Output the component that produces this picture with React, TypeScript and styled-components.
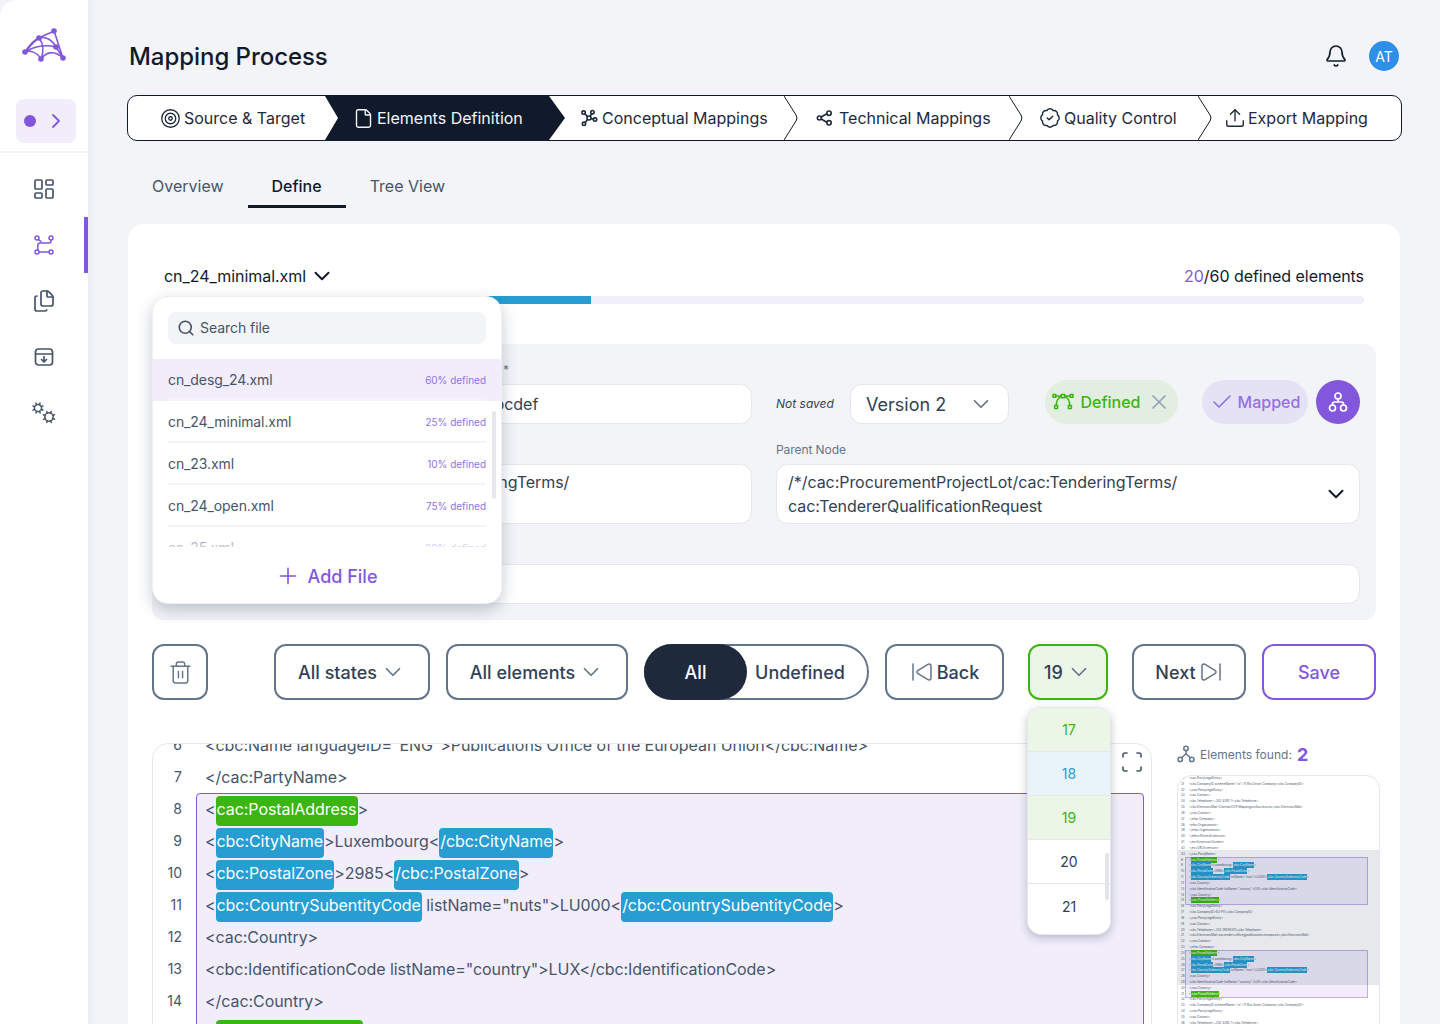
import React from "react";
import styled, { createGlobalStyle } from "styled-components";
import {
  Bell, Check, ChevronDown, ChevronRight, Files, LayoutDashboard, Plus, Scan, Search,
  SkipBack, SkipForward, Target, File as FileIcon, BadgeCheck, Upload, Trash2, X,
} from "lucide-react";

const PURPLE = "#8257dc";
const GREEN = "#3cb412";
const BLUE = "#279dd1";
const INK = "#111a2b";
const SLATE = "#334155";
const BORDER = "#64748b";
const PAGE = "#f3f4f8";

const Global = createGlobalStyle`
  * { box-sizing: border-box; }
  html, body { margin: 0; padding: 0; background: ${PAGE}; }
  body { font-family: Inter, "Liberation Sans", sans-serif; color: ${INK}; }
`;

const Page = styled.div`
  display: flex;
  width: 1440px;
  height: 1024px;
  overflow: hidden;
  background: ${PAGE};
`;

const Sidebar = styled.aside`
  flex: none;
  width: 88px;
  background: #fff;
  border-top-left-radius: 16px;
  box-shadow: 2px 0 6px rgba(100, 116, 139, 0.07);
  padding-top: 24px;
  display: flex;
  flex-direction: column;
`;

const Logo = styled.svg`
  width: 48px;
  height: 40px;
  margin: 0 0 35px 20px;
  display: block;
`;

const Expander = styled.div`
  width: 60px;
  height: 44px;
  margin-left: 16px;
  border-radius: 8px;
  background: #f1edfb;
  display: flex;
  align-items: center;
  padding-left: 8px;
  gap: 8px;
  color: ${PURPLE};
`;

const Dot = styled.span`
  width: 12px;
  height: 12px;
  border-radius: 50%;
  background: ${PURPLE};
`;

const SideRule = styled.div`
  height: 2px;
  margin: 8px 0;
  background: ${PAGE};
`;

const NavItem = styled.div<{ $active?: boolean }>`
  position: relative;
  height: 56px;
  display: flex;
  align-items: center;
  justify-content: center;
  color: ${(p) => (p.$active ? PURPLE : "#475569")};
  ${(p) =>
    p.$active
      ? `&::after { content: ""; position: absolute; right: 0; top: 0; bottom: 0; width: 4px; background: ${PURPLE}; }`
      : ""}
`;

const Main = styled.main`
  flex: 1;
  min-width: 0;
  padding: 0 40px;
`;

const Header = styled.header`
  height: 95px;
  padding-top: 18px;
  display: flex;
  align-items: center;
  justify-content: space-between;
  margin-right: 1px;
`;

const Title = styled.h1`
  margin: 0 0 0 1px;
  font-size: 24px;
  font-weight: 500;
  letter-spacing: -0.05px;
  color: ${INK};
`;

const HeaderTools = styled.div`
  display: flex;
  align-items: center;
  gap: 21px;
  margin-top: -1px;
  color: ${INK};
`;

const Avatar = styled.div`
  width: 30px;
  height: 30px;
  border-radius: 50%;
  background: #2f8fe6;
  color: #fff;
  font-size: 14px;
  display: flex;
  align-items: center;
  justify-content: center;
`;

const Stepper = styled.div`
  height: 46px;
  margin: 0 -2px 0 -1px;
  border: 1px solid ${INK};
  border-radius: 10px;
  background: #fff;
  display: flex;
  overflow: hidden;
`;

const Step = styled.div<{ $w: number; $pad: number; $gap: number; $active?: boolean }>`
  position: relative;
  flex: none;
  width: ${(p) => p.$w}px;
  padding-left: ${(p) => p.$pad}px;
  display: flex;
  align-items: center;
  gap: ${(p) => p.$gap}px;
  font-size: 16px;
  color: ${(p) => (p.$active ? "#f1f5f9" : "#1e293b")};
  z-index: ${(p) => (p.$active ? 1 : 0)};
  & > span, & > svg:not(.chev) { position: relative; flex: none; }
  ${(p) =>
    p.$active
      ? `&::before { content: ""; position: absolute; left: 0; top: 0; bottom: 0; width: 240px; background: ${INK};
         clip-path: polygon(0 0, 224px 0, 240px 50%, 224px 100%, 0 100%, 13px 50%); }`
      : ""}
`;

const Chevron = styled.svg`
  position: absolute;
  left: 100%;
  top: 0;
  width: 17px;
  height: 44px;
  fill: none;
  stroke: ${INK};
  stroke-width: 1;
`;

const Tabs = styled.nav`
  display: flex;
  margin-top: 24px;
`;

const Tab = styled.div<{ $active?: boolean }>`
  padding: 9px 24px 7px;
  line-height: 24px;
  font-size: 16px;
  font-weight: ${(p) => (p.$active ? 500 : 400)};
  color: ${(p) => (p.$active ? INK : "#475569")};
  border-bottom: 3px solid ${(p) => (p.$active ? INK : "transparent")};
`;

const Card = styled.section`
  position: relative;
  margin-top: 16px;
  height: 900px;
  padding: 40px 24px 0;
  background: #fff;
  border-radius: 16px;
`;

const FileRow = styled.div`
  display: flex;
  align-items: center;
  justify-content: space-between;
  height: 24px;
  padding: 0 12px;
  font-size: 16px;
  letter-spacing: -0.05px;
  color: ${INK};
`;

const FileName = styled.div`
  display: flex;
  align-items: center;
  gap: 3px;
`;

const Accent = styled.span`
  color: ${PURPLE};
`;

const Progress = styled.div`
  height: 8px;
  margin: 8px 12px 0;
  border-radius: 4px;
  background: #f1f0fa;
  overflow: hidden;
`;

const ProgressFill = styled.div`
  width: 427px;
  height: 100%;
  background: ${BLUE};
`;

const Panel = styled.div`
  margin-top: 40px;
  padding: 18px 16px 16px;
  background: ${PAGE};
  border-radius: 12px;
  display: grid;
  grid-template-columns: 584px 584px;
  column-gap: 24px;
  row-gap: 18px;
`;

const Field = styled.div<{ $span?: boolean }>`
  min-width: 0;
  ${(p) => (p.$span ? "grid-column: 1 / span 2;" : "")}
`;

const Label = styled.div`
  height: 16px;
  line-height: 16px;
  margin-bottom: 6px;
  font-size: 12px;
  letter-spacing: -0.07px;
  color: #64748b;
  white-space: nowrap;
`;

const Input = styled.div<{ $h: number }>`
  height: ${(p) => p.$h}px;
  padding: 5px 12px 5px 11px;
  background: #fff;
  border: 1px solid #e5e7eb;
  border-radius: 12px;
  font-size: 16px;
  line-height: 24px;
  letter-spacing: -0.05px;
  color: ${SLATE};
  display: flex;
  align-items: center;
  justify-content: space-between;
  white-space: nowrap;
  overflow: hidden;
  & > svg { margin-right: -2px; }
`;

const InputText = styled.div`
  color: ${SLATE};
`;

const StatusRow = styled.div`
  display: flex;
  align-items: flex-end;
  height: 62px;
`;

const NotSaved = styled.span`
  font-size: 12px;
  font-style: italic;
  color: ${SLATE};
  width: 74px;
  height: 40px;
  line-height: 40px;
`;

const VersionSelect = styled.div`
  width: 159px;
  height: 40px;
  padding: 0 14px 0 15px;
  background: #fff;
  border: 1px solid #e5e7eb;
  border-radius: 12px;
  font-size: 18px;
  color: ${SLATE};
  display: flex;
  align-items: center;
  justify-content: space-between;
  margin-right: 36px;
`;

const Pill = styled.div<{ $w: number; $bg: string; $fg: string; $mr: number; $gap: number }>`
  width: ${(p) => p.$w}px;
  height: 44px;
  margin-right: ${(p) => p.$mr}px;
  border-radius: 22px;
  background: ${(p) => p.$bg};
  color: ${(p) => p.$fg};
  font-size: 16px;
  font-weight: 500;
  display: flex;
  align-items: center;
  justify-content: center;
  gap: ${(p) => p.$gap}px;
`;

const RoundButton = styled.div`
  width: 44px;
  height: 44px;
  border-radius: 50%;
  background: ${PURPLE};
  color: #fff;
  display: flex;
  align-items: center;
  justify-content: center;
`;

const Popover = styled.div`
  position: absolute;
  left: 24px;
  top: 72px;
  width: 350px;
  height: 308px;
  background: #fff;
  border-radius: 16px;
  border: 1px solid #eef0f4;
  box-shadow: 0 6px 16px rgba(51, 65, 85, 0.28);
  display: flex;
  flex-direction: column;
  overflow: hidden;
  z-index: 5;
`;

const SearchBox = styled.div`
  flex: none;
  margin: 15px 15px 15px;
  height: 32px;
  padding-left: 9px;
  padding-bottom: 1px;
  border-radius: 8px;
  background: ${PAGE};
  display: flex;
  align-items: center;
  gap: 5px;
  font-size: 14px;
  letter-spacing: -0.05px;
  color: #475569;
`;

const FileList = styled.div`
  position: relative;
  flex: 1;
  min-height: 0;
  overflow: hidden;
  &::after {
    content: "";
    position: absolute;
    left: 0;
    right: 0;
    bottom: 0;
    height: 22px;
    background: linear-gradient(rgba(255, 255, 255, 0), rgba(255, 255, 255, 0.7));
  }
`;

const FileItem = styled.div<{ $active?: boolean }>`
  height: 42px;
  padding: 0 15px;
  background: ${(p) => (p.$active ? "#f1edfb" : "transparent")};
`;

const FileItemInner = styled.div`
  height: 42px;
  display: flex;
  align-items: center;
  justify-content: space-between;
  font-size: 14px;
  letter-spacing: -0.1px;
  color: #475569;
  border-bottom: 2px solid ${PAGE};
`;

const Percent = styled.span`
  font-size: 10px;
  padding-top: 2px;
  letter-spacing: -0.02px;
  color: #9272e3;
`;

const ListScroll = styled.div`
  position: absolute;
  right: 5px;
  top: 52px;
  width: 4px;
  height: 88px;
  border-radius: 2px;
  background: #e5e7eb;
`;

const AddFile = styled.div`
  flex: none;
  height: 56px;
  padding-top: 2px;
  padding-right: 2px;
  display: flex;
  align-items: center;
  justify-content: center;
  gap: 7px;
  font-size: 18px;
  font-weight: 500;
  color: ${PURPLE};
  background: #fff;
`;

const Toolbar = styled.div`
  display: flex;
  margin-top: 24px;
  height: 56px;
`;

const ToolButton = styled.div<{ $w: number; $mr: number; $tone?: "purple" | "green" }>`
  position: relative;
  flex: none;
  width: ${(p) => p.$w}px;
  margin-right: ${(p) => p.$mr}px;
  height: 56px;
  border: 2px solid ${(p) => (p.$tone === "purple" ? PURPLE : p.$tone === "green" ? GREEN : BORDER)};
  border-radius: 12px;
  background: ${(p) => (p.$tone === "green" ? "#ecf6e7" : "#fff")};
  color: ${(p) => (p.$tone === "purple" ? PURPLE : SLATE)};
  font-size: 18px;
  font-weight: 500;
  display: flex;
  align-items: center;
  justify-content: center;
  gap: 3px;
`;

const Toggle = styled.div`
  flex: none;
  width: 225px;
  height: 56px;
  margin-right: 16px;
  border: 2px solid ${BORDER};
  border-radius: 28px;
  display: flex;
  align-items: center;
  font-size: 18px;
  font-weight: 500;
  color: ${SLATE};
`;

const ToggleOn = styled.div`
  width: 103px;
  height: 56px;
  margin-left: -2px;
  border-radius: 28px;
  background: #1e293b;
  color: #fff;
  display: flex;
  align-items: center;
  justify-content: center;
`;

const ToggleOff = styled.div`
  flex: 1;
  text-align: center;
  padding-right: 14px;
`;

const NumberMenu = styled.div`
  position: absolute;
  left: -3px;
  top: 61px;
  width: 84px;
  height: 228px;
  background: #fff;
  border: 1px solid #e5e7eb;
  border-radius: 14px;
  box-shadow: 0 3px 8px rgba(51, 65, 85, 0.3);
  overflow: hidden;
  z-index: 5;
`;

const NumberItem = styled.div<{ $bg?: string; $fg?: string; $last?: boolean }>`
  height: 44px;
  background: ${(p) => p.$bg ?? "#fff"};
  color: ${(p) => p.$fg ?? SLATE};
  border-bottom: ${(p) => (p.$last ? "none" : "1px solid #e5e7eb")};
  font-size: 14px;
  font-weight: 400;
  display: flex;
  align-items: center;
  justify-content: center;
`;

const MenuScroll = styled.div`
  position: absolute;
  right: 1px;
  top: 145px;
  width: 4px;
  height: 47px;
  border-radius: 2px;
  background: #e2e5ea;
`;

const Lower = styled.div`
  display: flex;
  gap: 25px;
  margin-top: 43px;
  margin-right: -4px;
`;

const CodePanel = styled.div`
  position: relative;
  flex: none;
  width: 1000px;
  height: 400px;
  border: 1px solid #e5e7eb;
  border-radius: 16px 16px 0 0;
  overflow: hidden;
  display: flex;
`;

const Numbers = styled.div`
  flex: none;
  width: 43px;
  margin-top: -15px;
  padding-right: 14px;
  text-align: right;
  font-size: 14px;
  color: #475569;
`;

const NumberCell = styled.div`
  height: 32px;
  line-height: 32px;
`;

const Code = styled.div`
  flex: 1;
  min-width: 0;
  margin-top: -15px;
  padding-right: 7px;
  font-size: 16px;
  letter-spacing: -0.06px;
  color: #475569;
`;

const Line = styled.div`
  height: 32px;
  line-height: 32px;
  padding-left: 9px;
  white-space: pre;
`;

const Block = styled.div`
  border: 1px solid ${PURPLE};
  border-radius: 4px 4px 0 0;
  background: #f1edfb;
  & > div:first-child { margin-top: -1px; }
  & ${Line} { padding-left: 8px; }
`;

const Chip = styled.span<{ $c: string }>`
  display: inline-block;
  height: 30px;
  line-height: 26px;
  padding: 0 1px 4px;
  border-radius: 4px;
  background: ${(p) => p.$c};
  color: #fff;
`;

const Expand = styled.div`
  position: absolute;
  right: 7px;
  top: 6px;
  color: #475569;
  background: #fff;
`;

const Side = styled.aside`
  flex: none;
  width: 203px;
`;

const FoundRow = styled.div`
  height: 24px;
  margin-bottom: 9px;
  margin-top: -1px;
  display: flex;
  align-items: center;
  gap: 5px;
  font-size: 12px;
  letter-spacing: 0.03px;
  color: #64748b;
`;

const FoundCount = styled.b`
  font-size: 18px;
  font-weight: 700;
  color: ${PURPLE};
  margin-left: 0;
`;

const MiniMap = styled.div`
  position: relative;
  height: 300px;
  margin-top: 1px;
  border: 1px solid #e5e7eb;
  border-radius: 14px 14px 0 0;
  overflow: hidden;
  background: #fff;
  padding: 0 0 0 3px;
  font-size: 3px;
  color: #475569;
`;

const MiniLine = styled.div`
  height: 5.83px;
  line-height: 5.83px;
  white-space: pre;
`;

const MiniNum = styled.span`
  display: inline-block;
  width: 8px;
`;

const MiniBlock = styled.div`
  margin: -1px 11px -1px 4px;
  background: #f1edfb;
  border: 1px solid #c0acee;
  & ${MiniNum} { margin-left: -5px; }
`;

const MiniChip = styled.span<{ $c: string }>`
  background: ${(p) => p.$c};
  color: #fff;
  padding: 1px 0;
`;

const MiniWindow = styled.div`
  position: absolute;
  left: 0;
  right: 0;
  top: 74px;
  height: 135px;
  background: rgba(30, 41, 80, 0.11);
`;

type Seg = string | { t: string; c: string };
const g = (t: string) => ({ t, c: GREEN });
const b = (t: string) => ({ t, c: BLUE });

const before: Seg[][] = [
  ['<cbc:Name languageID="ENG">Publications Office of the European Union</cbc:Name>'],
  ["</cac:PartyName>"],
];

const block: Seg[][] = [
  ["<", g("cac:PostalAddress"), ">"],
  ["<", b("cbc:CityName"), ">Luxembourg<", b("/cbc:CityName"), ">"],
  ["<", b("cbc:PostalZone"), ">2985<", b("/cbc:PostalZone"), ">"],
  ["<", b("cbc:CountrySubentityCode"), ' listName="nuts">LU000<', b("/cbc:CountrySubentityCode"), ">"],
  ["<cac:Country>"],
  ['<cbc:IdentificationCode listName="country">LUX</cbc:IdentificationCode>'],
  ["</cac:Country>"],
  ["<", g("/cac:PostalAddress"), ">"],
];

const miniTop = [
  "<cac:PartyLegalEntity>",
  '<cbc:CompanyID schemeName="ro">11 Bus Union Company</cbc:CompanyID>',
  "</cac:PartyLegalEntity>",
  "<cac:Contact>",
  "<cbc:Telephone>+352 4392-1</cbc:Telephone>",
  "<cbc:ElectronicMail>ContractOCP.MappingoutSuccess.eu</cbc:ElectronicMail>",
  "</cac:Contact>",
  "</efac:Company>",
  "<efac:Organization>",
  "</efac:Organizations>",
  "</efext:EformsExtension>",
  "</ext:ExtensionContent>",
  "</ext:UBLExtension>",
  "</cac:PartyName>",
];

const miniMiddle = [
  "<cac:PartyLegalEntity>",
  "<cbc:CompanyID>EU-PO</cbc:CompanyID>",
  "</cac:PartyLegalEntity>",
  "<cac:Contact>",
  "<cbc:Telephone>+352 29294411</cbc:Telephone>",
  "<cbc:ElectronicMail>op.tenders.office@publications.europa.eu</cbc:ElectronicMail>",
  "</cac:Contact>",
  "</efac:Company>",
];

const miniEnd = [
  "<cac:PartyLegalEntity>",
  '<cbc:CompanyID schemeName="ro">11 Bus Union Company</cbc:CompanyID>',
  "</cac:PartyLegalEntity>",
  "<cac:Contact>",
  "<cbc:Telephone>+352 4392-1</cbc:Telephone>",
];

const files: [string, string][] = [
  ["cn_desg_24.xml", "60% defined"],
  ["cn_24_minimal.xml", "25% defined"],
  ["cn_23.xml", "10% defined"],
  ["cn_24_open.xml", "75% defined"],
  ["cn_25.xml", "20% defined"],
];

const iconProps = { fill: "none", stroke: "currentColor", strokeLinecap: "round" as const, strokeLinejoin: "round" as const };

const LogoMark = () => (
  <Logo viewBox="20 24 48 40" fill="none" stroke={PURPLE} strokeWidth="1.6">
    <path d="M25 52C30 44 34 40 39 38C45 35 50 33 54 31" />
    <path d="M25 52C32 47 44 44 56 47" />
    <path d="M25 52C30 50 37 52 41 59" />
    <path d="M39 38C43 43 44 51 41 59" />
    <path d="M39 38C47 36 53 41 56 47L63 58" />
    <path d="M54 31C57 39 60 50 63 58" />
    <path d="M41 59C46 52 54 50 63 58" />
    <path d="M39 38C33 42 29 47 25 52" />
    <g fill={PURPLE} stroke="none">
      <circle cx="25" cy="52" r="2.8" />
      <circle cx="39" cy="38" r="2.8" />
      <circle cx="54" cy="31" r="2.8" />
      <circle cx="56" cy="47" r="2.8" />
      <circle cx="41" cy="59" r="2.8" />
      <circle cx="63" cy="58" r="2.8" />
    </g>
  </Logo>
);

const RouteIcon = () => (
  <svg width="24" height="24" viewBox="0 0 24 24" strokeWidth="1.5" {...iconProps}>
    <circle cx="5" cy="5" r="2" />
    <path d="M6.5 6.5L9 8.6" />
    <circle cx="19" cy="5" r="2" />
    <path d="M19 7v1a2 2 0 0 1-2 2H8a2.2 2.2 0 0 0-2.2 2.2V17" />
    <circle cx="5" cy="19" r="2" />
    <circle cx="19" cy="19" r="2" />
    <path d="M7 19h10" />
  </svg>
);

const ArchiveDownIcon = () => (
  <svg width="24" height="24" viewBox="0 0 24 24" strokeWidth="1.7" {...iconProps}>
    <rect x="3.5" y="4" width="17" height="16" rx="3" />
    <path d="M3.5 9h17M12 11.5v5M9.5 14.5l2.5 2.5 2.5-2.5" />
  </svg>
);

const Gear = ({ cx, cy, r }: { cx: number; cy: number; r: number }) => (
  <g>
    <circle cx={cx} cy={cy} r={r} />
    {[0, 45, 90, 135, 180, 225, 270, 315].map((a) => {
      const rad = ((a + 22) * Math.PI) / 180;
      const x1 = cx + Math.cos(rad) * r;
      const y1 = cy + Math.sin(rad) * r;
      const x2 = cx + Math.cos(rad) * (r + 1.8);
      const y2 = cy + Math.sin(rad) * (r + 1.8);
      return <path key={a} d={`M${x1} ${y1}L${x2} ${y2}`} />;
    })}
  </g>
);

const GearsIcon = () => (
  <svg width="26" height="24" viewBox="0 0 26 24" strokeWidth="1.5" {...iconProps}>
    <Gear cx={7} cy={7} r={3.6} />
    <Gear cx={18} cy={16} r={4.2} />
  </svg>
);

const HubIcon = () => (
  <svg width="18" height="18" viewBox="0 0 18 18" strokeWidth="1.6" {...iconProps}>
    <circle cx="9" cy="9" r="2" />
    <circle cx="3.6" cy="3.6" r="1.7" />
    <circle cx="12.4" cy="3.2" r="1.7" />
    <circle cx="15" cy="10.6" r="1.7" />
    <circle cx="4" cy="14.8" r="1.7" />
    <path d="M4.8 4.8L7.6 7.6M11.8 4.8L10 7.3M13.3 10.2L11 9.6M5.2 13.6L7.6 10.4" />
  </svg>
);

const TripleIcon = () => (
  <svg width="18" height="18" viewBox="0 0 18 18" strokeWidth="1.6" {...iconProps}>
    <circle cx="3.4" cy="9" r="2" />
    <circle cx="13" cy="4.2" r="2.2" />
    <circle cx="13" cy="13.8" r="2.2" />
    <path d="M5.2 8L10.8 4.8M5.2 10L10.8 13.2" />
  </svg>
);

const CurveIcon = () => (
  <svg width="22" height="18" viewBox="0 0 22 18" strokeWidth="1.5" {...iconProps}>
    <rect x="9.4" y="1.5" width="3.2" height="3.2" />
    <rect x="1" y="1.5" width="2.8" height="2.8" />
    <rect x="18.2" y="1.5" width="2.8" height="2.8" />
    <rect x="2.6" y="12.6" width="3" height="3" />
    <rect x="16.4" y="12.6" width="3" height="3" />
    <path d="M3.8 3h5.6M12.6 3h5.6M4.1 12.6C4.4 7.5 6.5 4.5 9.4 3.4M17.9 12.6C17.6 7.5 15.5 4.5 12.6 3.4" />
  </svg>
);

const OrgIcon = () => (
  <svg width="24" height="24" viewBox="0 0 24 24" strokeWidth="1.7" {...iconProps}>
    <circle cx="12" cy="6" r="3" />
    <circle cx="6.5" cy="18" r="3" />
    <circle cx="17.5" cy="18" r="3" />
    <path d="M12 9v3M6.5 15v-1a2 2 0 0 1 2-2h7a2 2 0 0 1 2 2v1" />
  </svg>
);

const ForkIcon = () => (
  <svg width="18" height="18" viewBox="0 0 18 18" strokeWidth="1.5" {...iconProps}>
    <circle cx="9" cy="3.4" r="2.2" />
    <circle cx="3.2" cy="14.4" r="2.2" />
    <circle cx="14.8" cy="14.4" r="2.2" />
    <path d="M9 5.6v3.2M9 8.8L4.6 12.8M9 8.8l4.4 4" />
  </svg>
);

const ChevronMark = () => (
  <Chevron className="chev" viewBox="0 0 17 44">
    <path d="M0 0L12 19Q14 22 12 25L0 44" />
  </Chevron>
);

const renderCode = (line: Seg[]) =>
  line.map((s, i) => (typeof s === "string" ? s : <Chip key={i} $c={s.c}>{s.t}</Chip>));

const renderMini = (line: Seg[]) =>
  line.map((s, i) => (typeof s === "string" ? s : <MiniChip key={i} $c={s.c}>{s.t}</MiniChip>));

export default function App() {
  return (
    <>
      <Global />
      <Page>
        <Sidebar>
          <LogoMark />
          <Expander>
            <Dot />
            <ChevronRight size={24} strokeWidth={1.8} />
          </Expander>
          <SideRule />
          <NavItem><LayoutDashboard size={24} strokeWidth={1.7} /></NavItem>
          <NavItem $active><RouteIcon /></NavItem>
          <NavItem><Files size={24} strokeWidth={1.7} /></NavItem>
          <NavItem><ArchiveDownIcon /></NavItem>
          <NavItem><GearsIcon /></NavItem>
        </Sidebar>

        <Main>
          <Header>
            <Title>Mapping Process</Title>
            <HeaderTools>
              <Bell size={24} strokeWidth={1.7} />
              <Avatar>AT</Avatar>
            </HeaderTools>
          </Header>

          <Stepper>
            <Step $w={197} $pad={32} $gap={3}><Target size={21} strokeWidth={1.5} /><span>Source &amp; Target</span></Step>
            <Step $w={224} $pad={28} $gap={3} $active><FileIcon size={21} strokeWidth={1.6} /><span>Elements Definition</span></Step>
            <Step $w={235} $pad={31} $gap={4}><HubIcon /><span>Conceptual Mappings</span><ChevronMark /></Step>
            <Step $w={225} $pad={32} $gap={5}><TripleIcon /><span>Technical Mappings</span><ChevronMark /></Step>
            <Step $w={189} $pad={30} $gap={3}><BadgeCheck size={22} strokeWidth={1.6} /><span>Quality Control</span><ChevronMark /></Step>
            <Step $w={203} $pad={26} $gap={2}><Upload size={22} strokeWidth={1.5} /><span>Export Mapping</span></Step>
          </Stepper>

          <Tabs>
            <Tab>Overview</Tab>
            <Tab $active>Define</Tab>
            <Tab>Tree View</Tab>
          </Tabs>

          <Card>
            <FileRow>
              <FileName>cn_24_minimal.xml <ChevronDown size={26} strokeWidth={1.8} /></FileName>
              <span><Accent>20</Accent>/60 defined elements</span>
            </FileRow>
            <Progress><ProgressFill /></Progress>

            <Panel>
              <Field>
                <Label>Element identifier for the conceptual mapping group record *</Label>
                <Input $h={40}><InputText>bcdefabcdefabcdefabcdefabcdefabcdefabcdef</InputText></Input>
              </Field>
              <StatusRow>
                <NotSaved>Not saved</NotSaved>
                <VersionSelect>Version 2 <ChevronDown size={26} strokeWidth={1.6} color={BORDER} /></VersionSelect>
                <Pill $w={133} $bg="#e1eee0" $fg={GREEN} $mr={24} $gap={6}>
                  <CurveIcon />Defined<X size={24} strokeWidth={1.7} color="#94a3b8" />
                </Pill>
                <Pill $w={106} $bg="#e6e2f5" $fg="#9272e3" $mr={8} $gap={4}>
                  <Check size={24} strokeWidth={1.6} />Mapped
                </Pill>
                <RoundButton><OrgIcon /></RoundButton>
              </StatusRow>
              <Field>
                <Label>Field XPath</Label>
                <Input $h={60}>
                  <InputText>/*/cac:ProcurementProjectLot/cac:TenderingTerms/<br />cac:TendererQualificationRequest</InputText>
                </Input>
              </Field>
              <Field>
                <Label>Parent Node</Label>
                <Input $h={60}>
                  <InputText>/*/cac:ProcurementProjectLot/cac:TenderingTerms/<br />cac:TendererQualificationRequest</InputText>
                  <ChevronDown size={26} strokeWidth={1.8} color={INK} />
                </Input>
              </Field>
              <Field $span>
                <Label>Description</Label>
                <Input $h={40} />
              </Field>
            </Panel>

            <Popover>
              <SearchBox><Search size={18} strokeWidth={2.2} />Search file</SearchBox>
              <FileList>
                {files.map(([name, pct], i) => (
                  <FileItem key={name} $active={i === 0}>
                    <FileItemInner><span>{name}</span><Percent>{pct}</Percent></FileItemInner>
                  </FileItem>
                ))}
                <ListScroll />
              </FileList>
              <AddFile><Plus size={26} strokeWidth={1.5} />Add File</AddFile>
            </Popover>

            <Toolbar>
              <ToolButton $w={56} $mr={66}><Trash2 size={25} strokeWidth={1.4} color={BORDER} /></ToolButton>
              <ToolButton $w={156} $mr={16}>All states <ChevronDown size={26} strokeWidth={1.6} color={BORDER} /></ToolButton>
              <ToolButton $w={182} $mr={16}>All elements <ChevronDown size={26} strokeWidth={1.6} color={BORDER} /></ToolButton>
              <Toggle><ToggleOn>All</ToggleOn><ToggleOff>Undefined</ToggleOff></Toggle>
              <ToolButton $w={119} $mr={24}><SkipBack size={24} strokeWidth={1.5} color={BORDER} />Back</ToolButton>
              <ToolButton $w={80} $mr={24} $tone="green">
                19 <ChevronDown size={26} strokeWidth={1.6} color={BORDER} />
                <NumberMenu>
                  <NumberItem $bg="#ecf6e7" $fg={GREEN}>17</NumberItem>
                  <NumberItem $bg="#e9f4fa" $fg={BLUE}>18</NumberItem>
                  <NumberItem $bg="#ecf6e7" $fg={GREEN}>19</NumberItem>
                  <NumberItem>20</NumberItem>
                  <NumberItem $last>21</NumberItem>
                  <MenuScroll />
                </NumberMenu>
              </ToolButton>
              <ToolButton $w={114} $mr={16}>Next<SkipForward size={24} strokeWidth={1.5} color={BORDER} /></ToolButton>
              <ToolButton $w={114} $mr={0} $tone="purple">Save</ToolButton>
            </Toolbar>

            <Lower>
              <CodePanel>
                <Numbers>
                  {[6, 7, 8, 9, 10, 11, 12, 13, 14, 15].map((n) => <NumberCell key={n}>{n}</NumberCell>)}
                </Numbers>
                <Code>
                  {before.map((l, i) => <Line key={i}>{renderCode(l)}</Line>)}
                  <Block>
                    {block.map((l, i) => <Line key={i}>{renderCode(l)}</Line>)}
                  </Block>
                </Code>
                <Expand><Scan size={24} strokeWidth={1.6} /></Expand>
              </CodePanel>

              <Side>
                <FoundRow><ForkIcon />Elements found: <FoundCount>2</FoundCount></FoundRow>
                <MiniMap>
                  {miniTop.map((l, i) => <MiniLine key={i}><MiniNum>{i + 30}</MiniNum>{l}</MiniLine>)}
                  <MiniBlock>{block.map((l, i) => <MiniLine key={i}><MiniNum>{i + 8}</MiniNum>{renderMini(l)}</MiniLine>)}</MiniBlock>
                  {miniMiddle.map((l, i) => <MiniLine key={i}><MiniNum>{i + 16}</MiniNum>{l}</MiniLine>)}
                  <MiniBlock>{block.map((l, i) => <MiniLine key={i}><MiniNum>{i + 24}</MiniNum>{renderMini(l)}</MiniLine>)}</MiniBlock>
                  {miniEnd.map((l, i) => <MiniLine key={i}><MiniNum>{i + 32}</MiniNum>{l}</MiniLine>)}
                  <MiniWindow />
                </MiniMap>
              </Side>
            </Lower>
          </Card>
        </Main>
      </Page>
    </>
  );
}
